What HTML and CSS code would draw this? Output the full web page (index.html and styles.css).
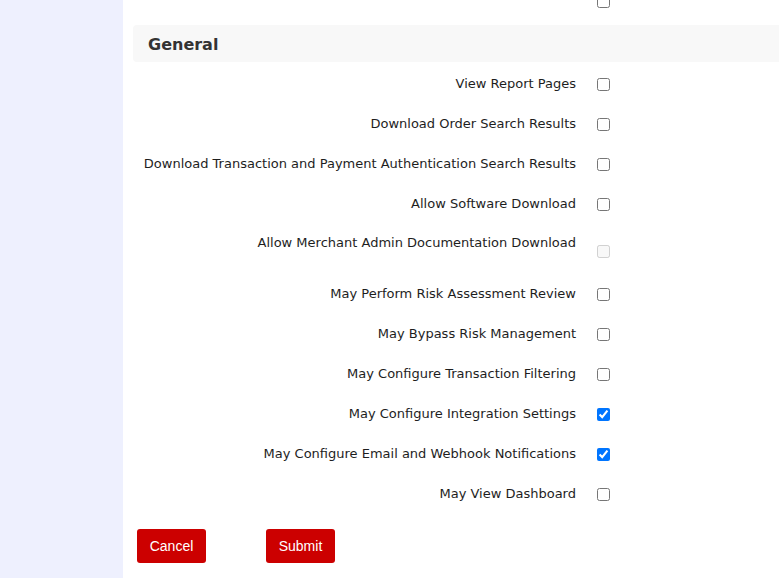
FILE: index.html
```html
<!DOCTYPE html>
<html lang="en">
<head>
<meta charset="utf-8">
<title>User Permissions</title>
<link rel="stylesheet" href="styles.css">
</head>
<body>
<div class="layout">
  <aside class="sidebar"></aside>
  <main class="main">
    <div class="row row-prev">
      <label class="label"></label>
      <span class="box"><input type="checkbox"></span>
    </div>
    <h2 class="section-title">General</h2>
    <div class="rows">
      <div class="row"><label class="label">View Report Pages</label><span class="box"><input type="checkbox"></span></div>
      <div class="row"><label class="label">Download Order Search Results</label><span class="box"><input type="checkbox"></span></div>
      <div class="row"><label class="label">Download Transaction and Payment Authentication Search Results</label><span class="box"><input type="checkbox"></span></div>
      <div class="row"><label class="label">Allow Software Download</label><span class="box"><input type="checkbox"></span></div>
      <div class="row row-tall"><label class="label">Allow Merchant Admin Documentation Download</label><span class="box"><input type="checkbox" disabled></span></div>
      <div class="row"><label class="label">May Perform Risk Assessment Review</label><span class="box"><input type="checkbox"></span></div>
      <div class="row"><label class="label">May Bypass Risk Management</label><span class="box"><input type="checkbox"></span></div>
      <div class="row"><label class="label">May Configure Transaction Filtering</label><span class="box"><input type="checkbox"></span></div>
      <div class="row"><label class="label">May Configure Integration Settings</label><span class="box"><input type="checkbox" checked></span></div>
      <div class="row"><label class="label">May Configure Email and Webhook Notifications</label><span class="box"><input type="checkbox" checked></span></div>
      <div class="row"><label class="label">May View Dashboard</label><span class="box"><input type="checkbox"></span></div>
    </div>
    <div class="actions">
      <button class="btn" type="button">Cancel</button>
      <button class="btn" type="submit">Submit</button>
    </div>
  </main>
</div>
</body>
</html>
```
FILE: styles.css
```css
html, body {
  margin: 0;
  padding: 0;
  background: #ffffff;
  overflow: hidden;
}
body {
  font-family: "DejaVu Sans", Verdana, sans-serif;
  font-size: 13px;
  color: #1e1e1e;
}
.layout {
  display: flex;
  min-height: 578px;
}
.sidebar {
  width: 123px;
  flex: none;
  background: #eef0fe;
}
.main {
  flex: 1;
  padding-left: 10px;
  min-width: 0;
}
.row {
  display: flex;
  align-items: center;
  min-height: 40px;
}
.row-prev {
  margin-top: -20px;
}
.label {
  width: 443px;
  flex: none;
  text-align: right;
  line-height: 14px;
  padding-top: 2px;
}
.row-tall {
  align-items: flex-start;
}
.row-tall .label {
  padding: 13px 0 23px 0;
}
.box {
  display: flex;
  align-items: center;
  padding-left: 21px;
}
.row-tall .box {
  padding-top: 20px;
}
.box input {
  margin: 2px 0 0 0;
  width: 13px;
  height: 13px;
}
.section-title {
  margin: 5px 0 0 0;
  height: 37px;
  padding: 2px 0 0 15px;
  box-sizing: border-box;
  display: flex;
  align-items: center;
  background: #f8f8f8;
  border-radius: 4px 0 0 4px;
  font-size: 16px;
  font-weight: bold;
  color: #333333;
}
.rows {
  padding-top: 1px;
}
.actions {
  display: flex;
  gap: 60px;
  padding: 16px 0 0 4px;
}
.btn {
  font-family: "Liberation Sans", Arial, sans-serif;
  font-size: 14px;
  color: #ffffff;
  background: #cc0000;
  border: none;
  border-radius: 3px;
  width: 69px;
  height: 34px;
  padding: 0;
}
```
